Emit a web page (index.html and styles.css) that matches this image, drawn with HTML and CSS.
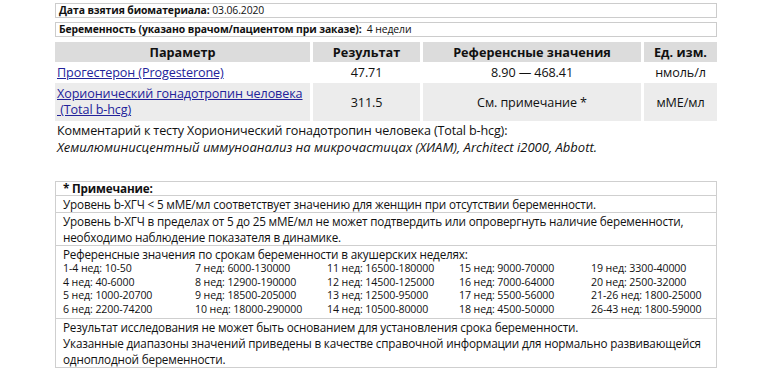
FILE: index.html
```html
<!DOCTYPE html>
<html lang="ru">
<head>
<meta charset="utf-8">
<link rel="stylesheet" href="styles.css">
</head>
<body>
<div class="wrap">
  <div class="info"><b>Дата взятия биоматериала:</b> 03.06.2020</div>
  <div class="info"><b>Беременность (указано врачом/пациентом при заказе):</b>&nbsp; 4 недели</div>

  <div class="results">
    <div class="hd">Параметр</div>
    <div class="hd">Результат</div>
    <div class="hd">Референсные значения</div>
    <div class="hd">Ед. изм.</div>

    <div class="c name"><a href="#">Прогестерон (Progesterone)</a></div>
    <div class="c ctr">47.71</div>
    <div class="c ctr">8.90 — 468.41</div>
    <div class="c ctr">нмоль/л</div>

    <div class="c name alt"><a href="#"><span class="nw">Хорионический гонадотропин человека</span><br>&nbsp;(Total b-hcg)</a></div>
    <div class="c ctr alt">311.5</div>
    <div class="c ctr alt">См. примечание *</div>
    <div class="c ctr alt">мМЕ/мл</div>
  </div>

  <div class="comment">
    <div>Комментарий к тесту Хорионический гонадотропин человека (Total b-hcg):</div>
    <div class="it">Хемилюминисцентный иммуноанализ на микрочастицах (ХИАМ), Architect i2000, Abbott.</div>
  </div>

  <div class="note">
    <div class="nrow head"><b>* Примечание:</b></div>
    <div class="nrow">Уровень b-ХГЧ &lt; 5 мМЕ/мл соответствует значению для женщин при отсутствии беременности.</div>
    <div class="nrow">Уровень b-ХГЧ в пределах от 5 до 25 мМЕ/мл не может подтвердить или опровергнуть наличие беременности, необходимо наблюдение показателя в динамике.</div>
    <div class="nrow">
      <div>Референсные значения по срокам беременности в акушерских неделях:</div>
      <div class="weeks">
        <span>1-4 нед: 10-50</span><span>7 нед: 6000-130000</span><span>11 нед: 16500-180000</span><span>15 нед: 9000-70000</span><span>19 нед: 3300-40000</span>
        <span>4 нед: 40-6000</span><span>8 нед: 12900-190000</span><span>12 нед: 14500-125000</span><span>16 нед: 7000-64000</span><span>20 нед: 2500-32000</span>
        <span>5 нед: 1000-20700</span><span>9 нед: 18500-205000</span><span>13 нед: 12500-95000</span><span>17 нед: 5500-56000</span><span>21-26 нед: 1800-25000</span>
        <span>6 нед: 2200-74200</span><span>10 нед: 18000-290000</span><span>14 нед: 10500-80000</span><span>18 нед: 4500-50000</span><span>26-43 нед: 1800-59000</span>
      </div>
    </div>
    <div class="nrow last">Результат исследования не может быть основанием для установления срока беременности.<br>Указанные диапазоны значений приведены в качестве справочной информации для нормально развивающейся одноплодной беременности.</div>
  </div>
</div>
</body>
</html>
```

FILE: styles.css
```css
* { box-sizing: border-box; }
body {
  margin: 0;
  background: #fff;
  color: #111;
  font-family: "Open Sans", "Noto Sans", sans-serif;
  font-size: 12px;
}
.wrap {
  width: 662px;
  margin-left: 55px;
  padding-top: 3px;
}
.info {
  border: 1px solid #ccc;
  height: 15px;
  line-height: 13px;
  padding: 0 3px;
  font-size: 10.4px;
  letter-spacing: -0.1px;
  margin-bottom: 4px;
}
.results {
  display: grid;
  grid-template-columns: 255px 107px 218px 73px;
  column-gap: 3px;
  row-gap: 1px;
  margin-top: 5px;
}
.hd {
  background: #dcdcdc;
  font-weight: bold;
  text-align: center;
  height: 20px;
  line-height: 20px;
  font-size: 12.7px;
}
.c {
  font-size: 12.6px;
  letter-spacing: -0.1px;
  line-height: 16px;
  padding: 2px 0 1px;
  display: flex;
  align-items: center;
}
.ctr { justify-content: center; }
.name { padding-left: 2px; }
.alt { background: #ececec; }
.alt.name { padding: 3px 2px 3px 2px; }
.nw { white-space: nowrap; }
a { color: #22229a; }
.comment {
  margin-top: 2px;
  padding-left: 2px;
  font-size: 12.6px;
  letter-spacing: -0.15px;
  line-height: 16px;
}
.it {
  font-style: italic;
  font-size: 13px;
  letter-spacing: 0;
}
.note {
  margin-top: 26px;
  border: 1px solid #cfcfcf;
  font-size: 11.7px;
  letter-spacing: -0.17px;
}
.nrow {
  padding: 0 7px;
  line-height: 16px;
  border-bottom: 1px solid #cfcfcf;
}
.nrow.head { line-height: 13px; }
.nrow.last { border-bottom: 0; }
.weeks {
  display: grid;
  grid-template-columns: repeat(5, 132px);
  font-size: 10.6px;
  letter-spacing: -0.1px;
  line-height: 13.7px;
  padding-bottom: 1px;
}
```
